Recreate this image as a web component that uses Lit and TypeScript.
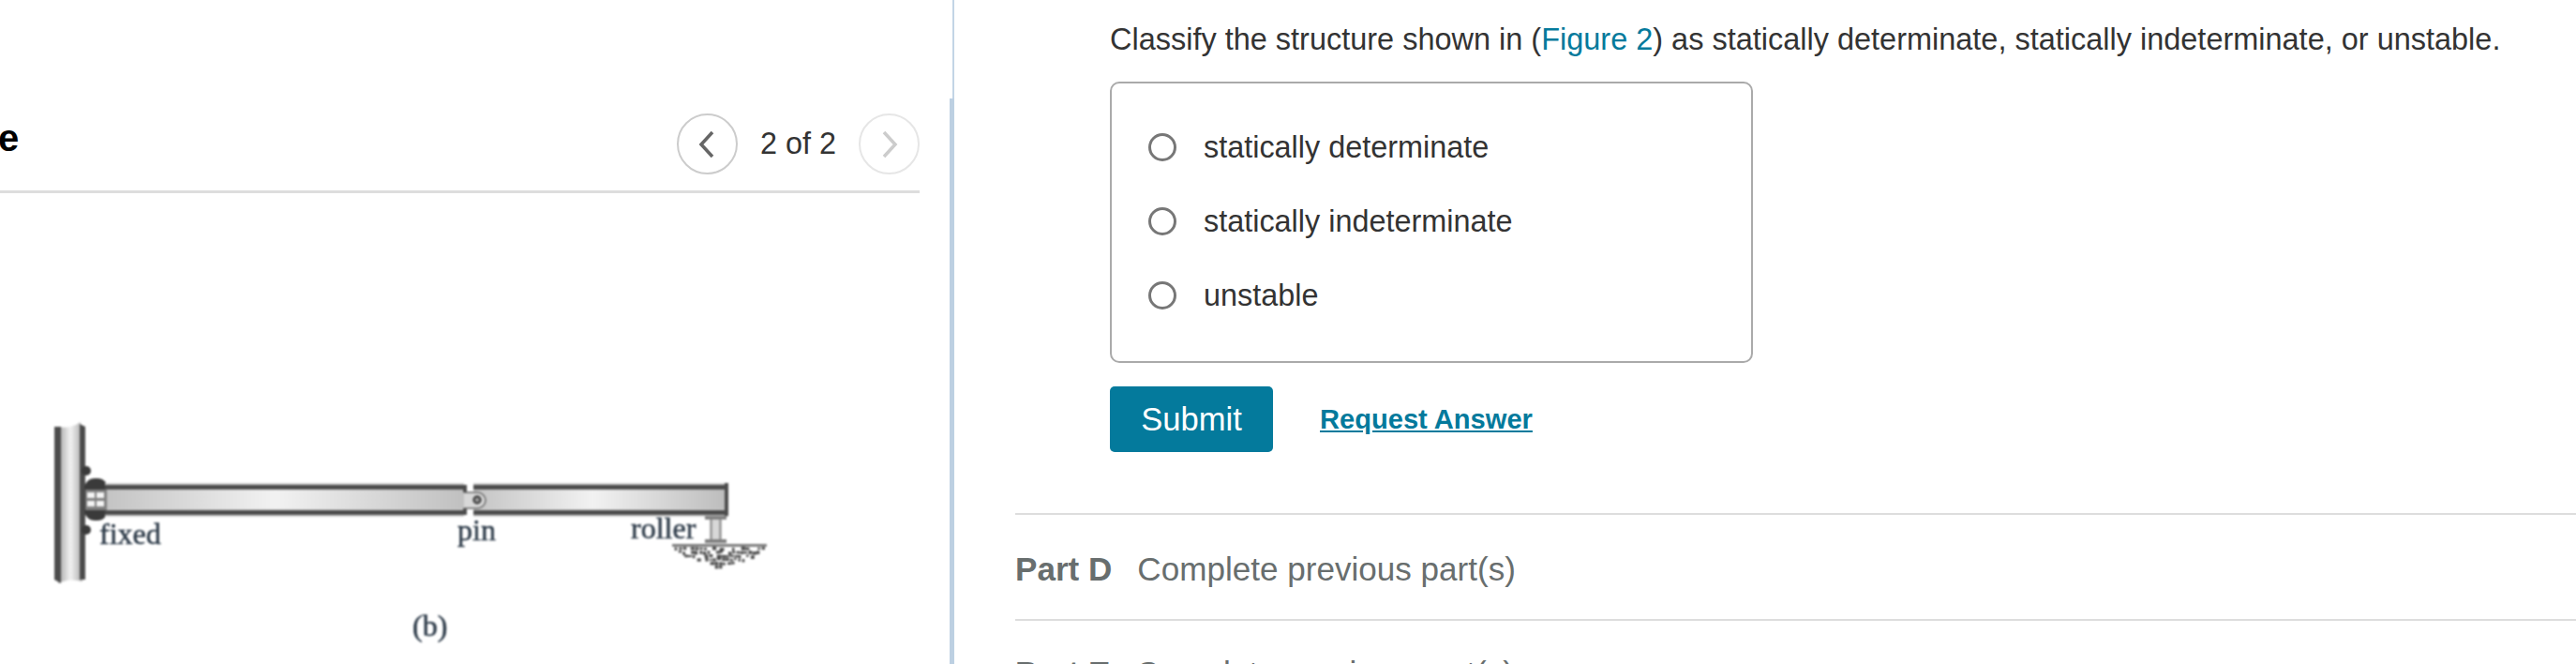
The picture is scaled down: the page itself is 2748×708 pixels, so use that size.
import { LitElement, html, css, svg } from "lit";
import { customElement } from "lit/decorators.js";

function groundDots() {
  const out = [];
  let seed = 11;
  const rnd = () => { seed = (seed * 16807) % 2147483647; return seed / 2147483647; };
  for (let row = 0; row < 6; row++) {
    const y = 583 + row * 3.9;
    const inset = row * row * 1.1 + row * 3;
    const x0 = 719 + inset, x1 = 812 - inset * 1.05;
    for (let x = x0; x < x1; x += 4.4) {
      if (rnd() < 0.8) {
        out.push(svg`<rect class="stone" x=${x + rnd() * 1.5} y=${y + rnd() * 1.5} width=${2.4 + rnd() * 2.6} height=${2 + rnd() * 1.8}></rect>`);
      }
    }
  }
  return out;
}

@customElement("app-root")
export class AppRoot extends LitElement {
  static styles = css`
    :host { display: block; width: 2748px; height: 708px; overflow: hidden; background: #fff;
      font-family: "Liberation Sans", Arial, sans-serif; color: #333; }
    .page { display: flex; height: 708px; }
    .left { width: 1013px; flex: none; overflow: hidden; }
    .head { width: 981px; height: 203px; display: flex; justify-content: space-between;
      border-bottom: 3px solid #ddd; }
    .title { margin: 119px 0 0 -102px; font-size: 40px; font-weight: 700; color: #000; line-height: 56px; }
    .nav { display: flex; align-items: center; height: 65px; margin-top: 121px; }
    .circle { width: 65px; height: 65px; box-sizing: border-box; border-radius: 50%; border: 2px solid #ccc;
      display: flex; align-items: center; justify-content: center; }
    .circle.off { border-color: #e6e6e6; }
    .chev { width: 20px; height: 32px; fill: none; stroke: #666; stroke-width: 3.5; }
    .off .chev { stroke: #ccc; }
    .count { font-size: 32.4px; margin: 0 24px; white-space: nowrap; }
    .fig { display: block; width: 1013px; height: 502px; filter: blur(0.85px); }
    .lbl { font-family: "Liberation Serif", "Times New Roman", serif; font-size: 32px; fill: #2c3a48; stroke: #2c3a48; stroke-width: 0.5; }
    .rail { fill: #4c4c4c; }
    .edge { fill: #cfcfcf; }
    .dark { fill: #3a3a3a; }
    .mid { fill: #808080; }
    .pale { fill: #d8d8d8; }
    .white { fill: #f4f4f4; }
    .stone { fill: #4a4a4a; }
    .ringc { fill: #999; stroke: #444; stroke-width: 2.4; }
    .sep { width: 5px; flex: none; display: flex; flex-direction: column; }
    .sep-top { height: 105px; width: 2px; margin-left: 3px; background: #c3d5e6; }
    .sep-bot { flex: 1; background: #bdd0e2; }
    .right { flex: 1; min-width: 0; padding-left: 65px; }
    .inner { padding-left: 101px; }
    .q { margin: 0 0 25px; padding-top: 22px; font-size: 32.48px; line-height: 40px; white-space: nowrap; }
    .link { color: #047a9c; text-decoration: none; }
    .box { width: 686px; height: 300px; box-sizing: border-box; border: 2px solid #aaa; border-radius: 10px; padding: 28px 0 0 39px; }
    .opt { height: 79px; display: flex; align-items: center; font-size: 32.4px; }
    .opt-t { margin-top: 2px; }
    .radio { width: 30px; height: 30px; box-sizing: border-box; border: 3px solid #777; border-radius: 50%; margin-right: 29px; flex: none; }
    .acts { display: flex; align-items: center; margin-top: 25px; }
    .submit { width: 174px; height: 70px; border: 0; border-radius: 5px; background: #047a9c; color: #fff;
      font: 34.6px "Liberation Sans", Arial, sans-serif; padding: 0; }
    .req { margin-left: 50px; font-size: 29.1px; font-weight: 700; color: #047a9c; text-decoration: underline; }
    .part { height: 113px; padding-top: 5px; box-sizing: border-box; border-top: 2px solid #ddd; display: flex; align-items: center; font-size: 35.1px; color: #686e6e; white-space: nowrap; }
    .part + .part { padding-top: 1px; }
    .parts { margin-top: 65px; }
    .part b { margin-right: 27px; }
  `;

  render() {
    return html`
      <div class="page">
        <div class="left">
          <div class="head">
            <div class="title">Figure</div>
            <div class="nav">
              <div class="circle"><svg class="chev" viewBox="0 0 20 32"><path d="M16 3 L4 16 L16 29"></path></svg></div>
              <div class="count">2 of 2</div>
              <div class="circle off"><svg class="chev" viewBox="0 0 20 32"><path d="M4 3 L16 16 L4 29"></path></svg></div>
            </div>
          </div>
          <svg class="fig" viewBox="0 206 1013 502">
            <defs>
              <linearGradient id="b1" x1="115" x2="495" y1="0" y2="0" gradientUnits="userSpaceOnUse">
                <stop offset="0" stop-color="#c4c4c4"></stop><stop offset="0.47" stop-color="#f2f2f2"></stop><stop offset="1" stop-color="#c0c0c0"></stop>
              </linearGradient>
              <linearGradient id="b2" x1="505" x2="776" y1="0" y2="0" gradientUnits="userSpaceOnUse">
                <stop offset="0" stop-color="#c4c4c4"></stop><stop offset="0.47" stop-color="#f2f2f2"></stop><stop offset="1" stop-color="#bcbcbc"></stop>
              </linearGradient>
              <linearGradient id="w" x1="64" x2="86" y1="0" y2="0" gradientUnits="userSpaceOnUse">
                <stop offset="0" stop-color="#b0b0b0"></stop><stop offset="0.5" stop-color="#f2f2f2"></stop><stop offset="1" stop-color="#b8b8b8"></stop>
              </linearGradient>
            </defs>

            <path fill="url(#w)" d="M62 455 Q74 458 86 450 L88 620 Q74 616 62 622 Z"></path>
            <path class="rail" d="M58 455 L65 455 L65 622 L58 618 Z"></path>
            <path class="rail" d="M85 452 L91 455 L91 618 L85 618 Z"></path>

            <circle class="dark" cx="92" cy="502" r="5"></circle>
            <circle class="dark" cx="92" cy="565" r="5"></circle>
            <rect class="dark" x="90" y="510" width="25" height="45" rx="11"></rect>

            <rect class="edge" x="112" y="515" width="383" height="36"></rect>
            <rect x="112" y="522" width="383" height="21" fill="url(#b1)"></rect>
            <rect class="rail" x="112" y="517" width="383" height="5"></rect>
            <rect class="rail" x="112" y="544" width="383" height="5"></rect>

            <rect class="mid" x="91" y="522" width="23" height="22"></rect>
            <rect class="white" x="93" y="525" width="8" height="6"></rect>
            <rect class="white" x="103" y="525" width="8" height="6"></rect>
            <rect class="white" x="93" y="534" width="8" height="6"></rect>
            <rect class="white" x="103" y="534" width="8" height="6"></rect>

            <rect class="edge" x="505" y="515" width="272" height="36"></rect>
            <rect x="505" y="522" width="270" height="21" fill="url(#b2)"></rect>
            <rect class="rail" x="505" y="517" width="272" height="5"></rect>
            <rect class="rail" x="505" y="544" width="272" height="5"></rect>
            <rect class="rail" x="773" y="515" width="4" height="35"></rect>
            <path class="rail" d="M494 517 L498 517 L498 525 L494 525 Z M494 542 L498 542 L498 549 L494 549 Z"></path>
            <path class="pale" d="M495 525 L509 525 A9 9 0 0 1 518 533.500 A9 9 0 0 1 509 542 L495 542 Z"></path>
            <path fill="none" stroke="#666" stroke-width="1.500" d="M495 525 L509 525 A9 9 0 0 1 518 533.500 A9 9 0 0 1 509 542 L495 542"></path>
            <circle class="ringc" cx="509" cy="533" r="3.500"></circle>

            <rect class="mid" x="752" y="550" width="23" height="4"></rect>
            <rect class="pale" x="759" y="554" width="9" height="21"></rect>
            <rect class="mid" x="757.500" y="554" width="2" height="21"></rect>
            <rect class="mid" x="767.500" y="554" width="2" height="21"></rect>
            <rect class="mid" x="752" y="575" width="23" height="4"></rect>
            <path class="mid" d="M717 580 L818 580 L818 583 L717 583 Z"></path>
            ${groundDots()}

            <text class="lbl" x="106" y="580">fixed</text>
            <text class="lbl" x="488" y="576">pin</text>
            <text class="lbl" x="673" y="574">roller</text>
            <text class="lbl" x="440" y="678">(b)</text>
          </svg>
        </div>
        <div class="sep"><div class="sep-top"></div><div class="sep-bot"></div></div>
        <div class="right">
          <div class="inner">
            <p class="q">Classify the structure shown in (<a class="link">Figure 2</a>) as statically determinate, statically indeterminate, or unstable.</p>
            <div class="box">
              <div class="opt"><span class="radio"></span><span class="opt-t">statically determinate</span></div>
              <div class="opt"><span class="radio"></span><span class="opt-t">statically indeterminate</span></div>
              <div class="opt"><span class="radio"></span><span class="opt-t">unstable</span></div>
            </div>
            <div class="acts">
              <button class="submit">Submit</button>
              <a class="req">Request Answer</a>
            </div>
          </div>
          <div class="parts">
            <div class="part"><b>Part D</b>Complete previous part(s)</div>
            <div class="part"><b>Part E</b>Complete previous part(s)</div>
          </div>
        </div>
      </div>
    `;
  }
}
